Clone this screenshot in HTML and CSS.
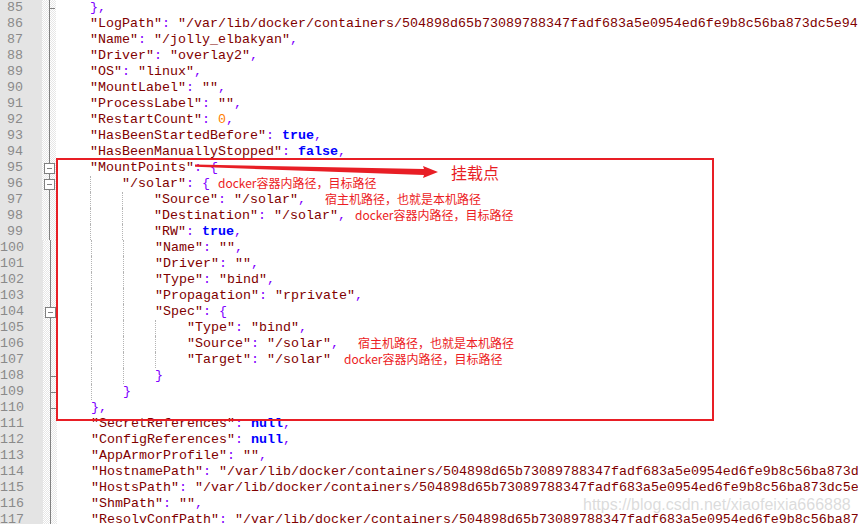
FILE: index.html
```html
<!DOCTYPE html>
<html lang="zh-CN">
<head>
<meta charset="utf-8">
<title>docker inspect - MountPoints</title>
<link rel="stylesheet" href="styles.css">
</head>
<body>
<div class="screen">
  <div class="editor">
    <div class="row"><span class="ln">85</span><span class="fold end"></span><span class="code"><span class="ind"></span><span class="p">},</span></span></div>
    <div class="row"><span class="ln">86</span><span class="fold"></span><span class="code"><span class="ind"></span><span class="s">"LogPath"</span><span class="p">: </span><span class="s">"/var/lib/docker/containers/504898d65b73089788347fadf683a5e0954ed6fe9b8c56ba873dc5e94e3f1a2b/504898d65b73089788347fadf683a5e0954ed6fe9b8c56ba873dc5e94e3f1a2b-json.log"</span><span class="p">,</span></span></div>
    <div class="row"><span class="ln">87</span><span class="fold"></span><span class="code"><span class="ind"></span><span class="s">"Name"</span><span class="p">: </span><span class="s">"/jolly_elbakyan"</span><span class="p">,</span></span></div>
    <div class="row"><span class="ln">88</span><span class="fold"></span><span class="code"><span class="ind"></span><span class="s">"Driver"</span><span class="p">: </span><span class="s">"overlay2"</span><span class="p">,</span></span></div>
    <div class="row"><span class="ln">89</span><span class="fold"></span><span class="code"><span class="ind"></span><span class="s">"OS"</span><span class="p">: </span><span class="s">"linux"</span><span class="p">,</span></span></div>
    <div class="row"><span class="ln">90</span><span class="fold"></span><span class="code"><span class="ind"></span><span class="s">"MountLabel"</span><span class="p">: </span><span class="s">""</span><span class="p">,</span></span></div>
    <div class="row"><span class="ln">91</span><span class="fold"></span><span class="code"><span class="ind"></span><span class="s">"ProcessLabel"</span><span class="p">: </span><span class="s">""</span><span class="p">,</span></span></div>
    <div class="row"><span class="ln">92</span><span class="fold"></span><span class="code"><span class="ind"></span><span class="s">"RestartCount"</span><span class="p">: </span><span class="n">0</span><span class="p">,</span></span></div>
    <div class="row"><span class="ln">93</span><span class="fold"></span><span class="code"><span class="ind"></span><span class="s">"HasBeenStartedBefore"</span><span class="p">: </span><span class="k">true</span><span class="p">,</span></span></div>
    <div class="row"><span class="ln">94</span><span class="fold"></span><span class="code"><span class="ind"></span><span class="s">"HasBeenManuallyStopped"</span><span class="p">: </span><span class="k">false</span><span class="p">,</span></span></div>
    <div class="row"><span class="ln">95</span><span class="fold box"></span><span class="code"><span class="ind"></span><span class="s">"MountPoints"</span><span class="p">: {</span></span></div>
    <div class="row"><span class="ln">96</span><span class="fold box"></span><span class="code"><span class="ind"></span><span class="ind g"></span><span class="s">"/solar"</span><span class="p">: {</span><span class="note gap8">docker容器内路径，目标路径</span></span></div>
    <div class="row"><span class="ln">97</span><span class="fold"></span><span class="code"><span class="ind"></span><span class="ind g"></span><span class="ind g"></span><span class="s">"Source"</span><span class="p">: </span><span class="s">"/solar"</span><span class="p">,</span><span class="note gap19">宿主机路径，也就是本机路径</span></span></div>
    <div class="row"><span class="ln">98</span><span class="fold"></span><span class="code"><span class="ind"></span><span class="ind g"></span><span class="ind g"></span><span class="s">"Destination"</span><span class="p">: </span><span class="s">"/solar"</span><span class="p">,</span><span class="note gap9">docker容器内路径，目标路径</span></span></div>
    <div class="row"><span class="ln">99</span><span class="fold"></span><span class="code"><span class="ind"></span><span class="ind g"></span><span class="ind g"></span><span class="s">"RW"</span><span class="p">: </span><span class="k">true</span><span class="p">,</span></span></div>
    <div class="row"><span class="ln">100</span><span class="fold"></span><span class="code"><span class="ind"></span><span class="ind g"></span><span class="ind g"></span><span class="s">"Name"</span><span class="p">: </span><span class="s">""</span><span class="p">,</span></span></div>
    <div class="row"><span class="ln">101</span><span class="fold"></span><span class="code"><span class="ind"></span><span class="ind g"></span><span class="ind g"></span><span class="s">"Driver"</span><span class="p">: </span><span class="s">""</span><span class="p">,</span></span></div>
    <div class="row"><span class="ln">102</span><span class="fold"></span><span class="code"><span class="ind"></span><span class="ind g"></span><span class="ind g"></span><span class="s">"Type"</span><span class="p">: </span><span class="s">"bind"</span><span class="p">,</span></span></div>
    <div class="row"><span class="ln">103</span><span class="fold"></span><span class="code"><span class="ind"></span><span class="ind g"></span><span class="ind g"></span><span class="s">"Propagation"</span><span class="p">: </span><span class="s">"rprivate"</span><span class="p">,</span></span></div>
    <div class="row"><span class="ln">104</span><span class="fold box"></span><span class="code"><span class="ind"></span><span class="ind g"></span><span class="ind g"></span><span class="s">"Spec"</span><span class="p">: {</span></span></div>
    <div class="row"><span class="ln">105</span><span class="fold"></span><span class="code"><span class="ind"></span><span class="ind g"></span><span class="ind g"></span><span class="ind g"></span><span class="s">"Type"</span><span class="p">: </span><span class="s">"bind"</span><span class="p">,</span></span></div>
    <div class="row"><span class="ln">106</span><span class="fold"></span><span class="code"><span class="ind"></span><span class="ind g"></span><span class="ind g"></span><span class="ind g"></span><span class="s">"Source"</span><span class="p">: </span><span class="s">"/solar"</span><span class="p">,</span><span class="note gap19">宿主机路径，也就是本机路径</span></span></div>
    <div class="row"><span class="ln">107</span><span class="fold"></span><span class="code"><span class="ind"></span><span class="ind g"></span><span class="ind g"></span><span class="ind g"></span><span class="s">"Target"</span><span class="p">: </span><span class="s">"/solar"</span><span class="note gap13">docker容器内路径，目标路径</span></span></div>
    <div class="row"><span class="ln">108</span><span class="fold end"></span><span class="code"><span class="ind"></span><span class="ind g"></span><span class="ind g"></span><span class="p">}</span></span></div>
    <div class="row"><span class="ln">109</span><span class="fold end"></span><span class="code"><span class="ind"></span><span class="ind g"></span><span class="p">}</span></span></div>
    <div class="row"><span class="ln">110</span><span class="fold end"></span><span class="code"><span class="ind"></span><span class="p">},</span></span></div>
    <div class="row"><span class="ln">111</span><span class="fold"></span><span class="code"><span class="ind"></span><span class="s">"SecretReferences"</span><span class="p">: </span><span class="k">null</span><span class="p">,</span></span></div>
    <div class="row"><span class="ln">112</span><span class="fold"></span><span class="code"><span class="ind"></span><span class="s">"ConfigReferences"</span><span class="p">: </span><span class="k">null</span><span class="p">,</span></span></div>
    <div class="row"><span class="ln">113</span><span class="fold"></span><span class="code"><span class="ind"></span><span class="s">"AppArmorProfile"</span><span class="p">: </span><span class="s">""</span><span class="p">,</span></span></div>
    <div class="row"><span class="ln">114</span><span class="fold"></span><span class="code"><span class="ind"></span><span class="s">"HostnamePath"</span><span class="p">: </span><span class="s">"/var/lib/docker/containers/504898d65b73089788347fadf683a5e0954ed6fe9b8c56ba873dc5e94e3f1a2b/hostname"</span><span class="p">,</span></span></div>
    <div class="row"><span class="ln">115</span><span class="fold"></span><span class="code"><span class="ind"></span><span class="s">"HostsPath"</span><span class="p">: </span><span class="s">"/var/lib/docker/containers/504898d65b73089788347fadf683a5e0954ed6fe9b8c56ba873dc5e94e3f1a2b/hosts"</span><span class="p">,</span></span></div>
    <div class="row"><span class="ln">116</span><span class="fold"></span><span class="code"><span class="ind"></span><span class="s">"ShmPath"</span><span class="p">: </span><span class="s">""</span><span class="p">,</span></span></div>
    <div class="row"><span class="ln">117</span><span class="fold"></span><span class="code"><span class="ind"></span><span class="s">"ResolvConfPath"</span><span class="p">: </span><span class="s">"/var/lib/docker/containers/504898d65b73089788347fadf683a5e0954ed6fe9b8c56ba873dc5e94e3f1a2b/resolv.conf"</span><span class="p">,</span></span></div>
  </div>

  <div class="frame"></div>
  <svg class="arrow" width="858" height="524" viewBox="0 0 858 524" aria-hidden="true">
    <polygon points="195,164.5 424,169 423,166 438,172 423,178 424,175 195,166.8" fill="#e81e25"/>
  </svg>
  <div class="label">挂载点</div>
  <div class="watermark">https://blog.csdn.net/xiaofeixia666888</div>
</div>
</body>
</html>
```

FILE: styles.css
```css
html, body {
  margin: 0;
  padding: 0;
  background: #ffffff;
}

.screen {
  display: flow-root;
  position: relative;
  width: 858px;
  height: 524px;
  overflow: hidden;
  background: #ffffff;
}

.editor {
  font-family: "Liberation Mono", "Courier New", monospace;
  font-size: 13.333px;
  line-height: 16px;
}

.row {
  display: flex;
  height: 16px;
}

.ln {
  flex: 0 0 42px;
  box-sizing: border-box;
  display: flex;
  justify-content: flex-end;
  padding-right: 19px;
  background: #e4e4e4;
  color: #8a8a8a;
  white-space: pre;
}

.fold {
  flex: 0 0 14px;
  position: relative;
  background: repeating-conic-gradient(#ffffff 0 25%, #e6e6e6 0 50%) 0 0 / 2px 2px;
}

.fold::before {
  content: "";
  position: absolute;
  left: 7px;
  top: 0;
  bottom: 0;
  width: 1px;
  background: #808080;
}

.fold.end::after {
  content: "";
  position: absolute;
  left: 7px;
  top: 8px;
  width: 6px;
  height: 1px;
  background: #808080;
}

.fold.box::after {
  content: "";
  position: absolute;
  left: 2px;
  top: 3px;
  width: 11px;
  height: 11px;
  box-sizing: border-box;
  border: 1px solid #808080;
  background: linear-gradient(#808080, #808080) center / 5px 1px no-repeat, #ffffff;
}

.code {
  flex: 1 1 auto;
  padding-left: 2px;
  white-space: pre;
}

.ind {
  display: inline-block;
  box-sizing: border-box;
  width: 32px;
  height: 16px;
  vertical-align: top;
}

.ind.g {
  border-left: 1px dotted #b4b4b4;
}

.s { color: #800000; }
.p { color: #8000ff; }
.k { color: #0000ff; font-weight: bold; }
.n { color: #ff8000; }

.note {
  display: inline-block;
  vertical-align: top;
  margin-top: -1px;
  font-family: "Noto Sans CJK SC", "Noto Sans", sans-serif;
  font-size: 12px;
  line-height: 16px;
  color: #ec1c24;
}

.gap8 { margin-left: 8px; }
.gap9 { margin-left: 9px; }
.gap13 { margin-left: 13px; }
.gap19 { margin-left: 19px; }

.frame {
  position: absolute;
  left: 56px;
  top: 158px;
  width: 658px;
  height: 263px;
  box-sizing: border-box;
  border: 2px solid #e81e25;
}

.arrow {
  position: absolute;
  left: 0;
  top: 0;
}

.label {
  position: absolute;
  left: 451px;
  top: 162px;
  font-family: "Noto Sans CJK SC", sans-serif;
  font-size: 16px;
  line-height: 20px;
  color: #e81e25;
}

.watermark {
  position: absolute;
  left: 583px;
  top: 495px;
  font-family: "Liberation Sans", Arial, sans-serif;
  font-size: 16px;
  line-height: 20px;
  color: rgba(190, 190, 190, 0.55);
}
```
